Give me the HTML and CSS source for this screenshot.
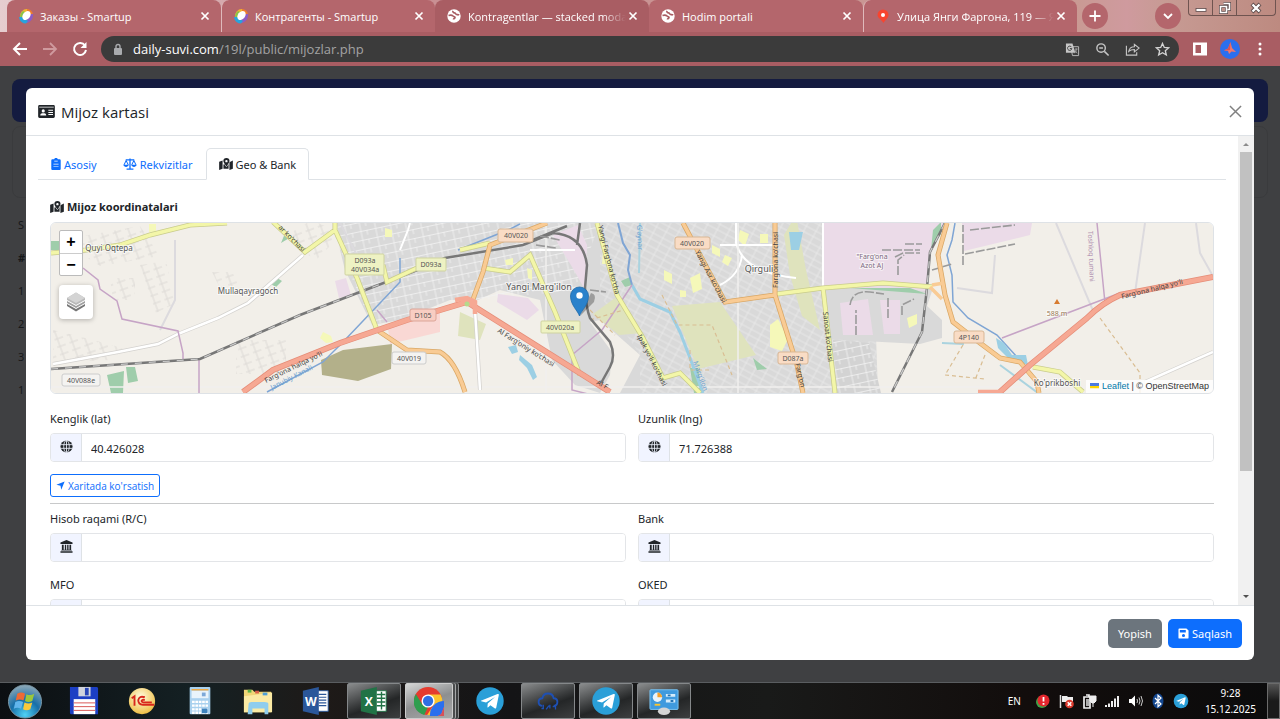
FILE: index.html
```html
<!DOCTYPE html>
<html lang="uz">
<head>
  <meta charset="UTF-8">
  <meta name="viewport" content="width=device-width, initial-scale=1.0">
  <title>Mijoz kartasi</title>
  <link rel="stylesheet" href="styles.css">
</head>
<body>
  <svg class="sprite" aria-hidden="true">
    <symbol id="i-close" viewBox="0 0 10 10"><path d="M1.5 1.5l7 7M8.500 1.500l-7 7" stroke="currentColor" stroke-width="1.700" fill="none"/></symbol>
    <symbol id="i-smartup" viewBox="0 0 16 16">
      <path d="M2 9A7 7 0 0 1 9 1l3 2-8 9z" fill="#f2b632"/>
      <path d="M2 8a7 7 0 0 1 3-5l2 1-4 7z" fill="#8bc34a"/>
      <path d="M9 1a6 6 0 0 1 6 6l-2 1-4-5z" fill="#ef7d2d"/>
      <path d="M15 6a8 8 0 0 1-9 9l2-3 5-6z" fill="#8d5cc4"/>
      <path d="M1 9a7 7 0 0 0 7 6.500l2-2.500-6-4z" fill="#29a3dc"/>
      <ellipse cx="8.500" cy="7.500" rx="3.600" ry="5" transform="rotate(38 8.500 7.500)" fill="#fff"/>
    </symbol>
    <symbol id="i-world" viewBox="0 0 16 16">
      <circle cx="8" cy="8" r="6.700" fill="#fff"/>
      <path d="M2.500 7.500c1.500-.5 3.500-.5 4.500.5s2 .5 2 1.500-1.500 1-1.500 2M7 2.800c-.5 1.200.5 2 1.500 2s1 1.500 2 1.700 2 0 2.500.8" stroke="#a95d63" stroke-width="1.700" fill="none"/>
    </symbol>
    <symbol id="i-map" viewBox="0 0 16 14">
      <path d="M0 4.500L4 3v9.500L0 14zM5 8l1-1c1 2 2 3 2.500 3.500.6-.6 1.500-1.500 2.500-3.500v5.500L5 12.500zM12 5l4-2v9.500L12 14z" fill="currentColor"/>
      <path fill-rule="evenodd" d="M8.500 0a3.600 3.600 0 0 1 3.600 3.600c0 1.800-2.500 5-3.600 6.200-1.100-1.200-3.600-4.400-3.600-6.200A3.600 3.600 0 0 1 8.500 0zm0 2.300a1.400 1.400 0 1 0 0 2.800 1.400 1.400 0 0 0 0-2.800z" fill="currentColor"/>
    </symbol>
    <symbol id="i-globe" viewBox="0 0 14 14">
      <circle cx="7" cy="7" r="6.500" fill="currentColor"/>
      <path d="M.5 5h13M.5 9h13M7 .5v13" stroke="#f1f4ff" stroke-width=".9"/>
      <ellipse cx="7" cy="7" rx="3" ry="6.500" stroke="#f1f4ff" stroke-width=".9" fill="none"/>
    </symbol>
    <symbol id="i-bank" viewBox="0 0 14 14">
      <path d="M7 0l6.500 2.800v1.400H.5V2.800zM2 5h2v5.500h1.200V5h1.500v5.500h1V5h1.500v5.500h1V5H12v5.500l1 .8H1l1-.8zM.5 12h13v1.700H.5z" fill="currentColor"/>
    </symbol>
    <symbol id="i-telegram" viewBox="0 0 28 28">
      <circle cx="14" cy="14" r="12.800" fill="#2a9fd8"/>
      <path d="M5.500 13.800L21 7.500c.9-.3 1.400.2 1.200 1.200l-2.400 11.500c-.2.9-.8 1-1.500.6l-3.900-2.900-2 2c-.4.300-.8.100-.8-.4l.3-3.100 6.800-6.200-8.400 5.300-4.500-1.300z" fill="#fff"/>
    </symbol>
    <symbol id="i-bird" viewBox="0 0 20 20">
      <circle cx="10" cy="10" r="10" fill="#2b6fee"/>
      <path d="M10.500 3l1.500 6 4 4-4.500-.5L9 15l-1-3-4-.5 4-2z" fill="#f0776d"/><path d="M10.500 3L10 11l-6 .5 4-2z" fill="#d95058"/>
    </symbol>
  </svg>

  <header class="browser">
    <div class="tabstrip">
      <div class="btab"><svg class="fav"><use href="#i-smartup"/></svg><span class="btab-title">Заказы - Smartup</span><button class="btab-x" aria-label="Close tab"><svg><use href="#i-close"/></svg></button></div>
      <div class="btab split"><svg class="fav"><use href="#i-smartup"/></svg><span class="btab-title">Контрагенты - Smartup</span><button class="btab-x" aria-label="Close tab"><svg><use href="#i-close"/></svg></button></div>
      <div class="btab current"><svg class="fav"><use href="#i-world"/></svg><span class="btab-title fade">Kontragentlar — stacked moda</span><button class="btab-x" aria-label="Close tab"><svg><use href="#i-close"/></svg></button></div>
      <div class="btab"><svg class="fav"><use href="#i-world"/></svg><span class="btab-title">Hodim portali</span><button class="btab-x" aria-label="Close tab"><svg><use href="#i-close"/></svg></button></div>
      <div class="btab split"><svg class="fav" viewBox="0 0 16 16"><path d="M8 1.500a5.500 5.500 0 0 1 5.500 5.500c0 3-3 4.500-5 8-2-3.500-6-5-6-8A5.500 5.500 0 0 1 8 1.500z" fill="#f8442f"/><circle cx="8" cy="7" r="2" fill="#fff"/></svg><span class="btab-title fade">Улица Янги Фаргона, 119 — Я</span><button class="btab-x" aria-label="Close tab"><svg><use href="#i-close"/></svg></button></div>
      <button class="round-btn" aria-label="New tab"><svg viewBox="0 0 12 12"><path d="M6 .5v11M.5 6h11" stroke="#fff" stroke-width="1.800"/></svg></button>
      <span class="grow"></span>
      <button class="round-btn" aria-label="Search tabs"><svg viewBox="0 0 12 12"><path d="M2 4l4 4 4-4" stroke="#fff" stroke-width="1.800" fill="none"/></svg></button>
      <div class="win-btns">
        <button aria-label="Minimize"><svg viewBox="0 0 14 12"><rect x="2" y="6.500" width="10" height="3" fill="#fff" stroke="#5c4a4a" stroke-width=".8"/></svg></button>
        <button aria-label="Restore"><svg viewBox="0 0 14 12"><path d="M5.500 1.500h6v6h-2M2.500 4.500h6v6h-6z" fill="none" stroke="#5c4a4a" stroke-width="3"/><path d="M5.500 1.500h6v6h-2M2.500 4.500h6v6h-6z" fill="none" stroke="#fff" stroke-width="1.600"/></svg></button>
        <button class="win-x" aria-label="Close"><svg viewBox="0 0 14 12"><path d="M3 2l8 8M11 2l-8 8" stroke="#5c4a4a" stroke-width="4"/><path d="M3.500 2.500l7 7M10.500 2.500l-7 7" stroke="#fff" stroke-width="2.400"/></svg></button>
      </div>
    </div>
    <div class="toolbar">
      <button class="nav-btn" aria-label="Back"><svg viewBox="0 0 16 16"><path d="M15 8H2M8 2L2 8l6 6" stroke="#fff" stroke-width="2" fill="none"/></svg></button>
      <button class="nav-btn" aria-label="Forward"><svg viewBox="0 0 16 16"><path d="M1 8h13M8 2l6 6-6 6" stroke="#cf9a9e" stroke-width="1.800" fill="none"/></svg></button>
      <button class="nav-btn" aria-label="Reload"><svg viewBox="0 0 16 16"><path d="M13 4.500A6 6 0 1 0 14 9" stroke="#fff" stroke-width="2" fill="none"/><path d="M14.500 1v6h-6z" fill="#fff"/></svg></button>
      <div class="omnibox">
        <svg class="lock" viewBox="0 0 10 13"><rect x="1" y="5" width="8" height="7" rx="1" fill="#a9abae"/><path d="M3 5V3.500a2 2 0 0 1 4 0V5" stroke="#a9abae" stroke-width="1.400" fill="none"/></svg>
        <span class="url"><b>daily-suvi.com</b>/19l/public/mijozlar.php</span>
        <button aria-label="Translate"><svg viewBox="0 0 16 16"><path d="M6 5h8.500v9.500H8z" stroke="#bbb" fill="none"/><path d="M1 1.500h7l3 10H1z" fill="#c6c6c6"/><path d="M7 5.500A2.300 2.300 0 1 0 7.300 7H5.200" stroke="#3c3c3c" fill="none"/><path d="M10.500 7.500h3M12 7v1c0 2-1 3-2 4m1-3c.5 1 1 2 2 3" stroke="#bbb" stroke-width=".8" fill="none"/></svg></button>
        <button aria-label="Zoom"><svg viewBox="0 0 16 16"><circle cx="6.500" cy="6.500" r="4.500" stroke="#c6c6c6" stroke-width="1.500" fill="none"/><path d="M4.500 6.500h4M10 10l4.500 4.500" stroke="#c6c6c6" stroke-width="1.600"/></svg></button>
        <button aria-label="Share"><svg viewBox="0 0 16 16"><path d="M1.500 4v10h11v-3" stroke="#c6c6c6" stroke-width="1.200" fill="none"/><path d="M4 10c.5-3 2.500-5 6-5V2.500l5 4-5 4V8c-3 0-4.500.5-6 2z" stroke="#c6c6c6" stroke-width="1.200" fill="none"/></svg></button>
        <button aria-label="Bookmark"><svg viewBox="0 0 16 16"><path d="M8 1.500l1.900 4.300 4.700.4-3.600 3.100 1.100 4.600L8 11.500l-4.100 2.400L5 9.300 1.400 6.200l4.700-.4z" stroke="#d4d4d4" stroke-width="1.400" fill="none"/></svg></button>
      </div>
      <button class="nav-btn" aria-label="Side panel"><svg viewBox="0 0 16 16"><path fill-rule="evenodd" d="M1 1.500h14v13H1zM3.500 4v8H9V4z" fill="#fff"/></svg></button>
      <button class="nav-btn big" aria-label="Profile"><svg><use href="#i-bird"/></svg></button>
      <button class="nav-btn" aria-label="Menu"><svg viewBox="0 0 16 16"><circle cx="8" cy="3" r="1.500" fill="#fff"/><circle cx="8" cy="8" r="1.500" fill="#fff"/><circle cx="8" cy="13" r="1.500" fill="#fff"/></svg></button>
    </div>
  </header>

  <main class="page">
    <div class="under">
      <div class="under-nav"></div>
      <div class="under-card"></div>
      <div class="under-list"><span>S</span><b>#</b><span>1</span><span>2</span><span>3</span><span>1</span></div>
    </div>

    <div class="modal-wrap">
      <section class="modal" role="dialog" aria-labelledby="modalTitle">
        <div class="modal-header">
          <svg class="card-icon" viewBox="0 0 18 14"><path fill-rule="evenodd" d="M1.500 0h15A1.500 1.500 0 0 1 18 1.500v11a1.500 1.500 0 0 1-1.500 1.500h-15A1.500 1.500 0 0 1 0 12.500v-11A1.500 1.500 0 0 1 1.500 0zM1.200 1.800v1h15.600v-1zM5.500 4.700a1.700 1.700 0 1 0 0 3.400 1.700 1.700 0 0 0 0-3.400zM2.300 11.300h6.400c0-1.600-1-2.500-2-2.500H4.300c-1 0-2 .9-2 2.500zM11 5.200v1h5v-1zm0 2.300v1h5v-1zm0 2.300v1h5v-1z" fill="currentColor"/></svg>
          <h1 id="modalTitle">Mijoz kartasi</h1>
          <button class="modal-x" aria-label="Close"><svg viewBox="0 0 14 14"><path d="M1 1l12 12M13 1L1 13" stroke="#808080" stroke-width="1.600"/></svg></button>
        </div>

        <div class="modal-main">
          <div class="modal-body">
            <nav class="tabs">
              <a href="#asosiy"><svg class="narrow" viewBox="0 0 11 14"><path fill-rule="evenodd" d="M1.300 1.500h2a2.300 2.300 0 0 1 4.400 0h2A1.300 1.300 0 0 1 11 2.800v9.900A1.300 1.300 0 0 1 9.700 14H1.300A1.300 1.300 0 0 1 0 12.700V2.800a1.300 1.300 0 0 1 1.300-1.300zM3.500 3.200v.8h4v-.8zM2.500 6.800v.8h6v-.8zm0 2.700v.8h6v-.8z" fill="currentColor"/></svg>Asosiy</a>
              <a href="#rekvizitlar"><svg viewBox="0 0 16 14"><path d="M3 2.200h10M8 .5v12M4 13h8" stroke="currentColor" stroke-width="1.500"/><path d="M1 8l2.500-5L6 8M10 8l2.500-5L15 8" stroke="currentColor" stroke-width="1.200" fill="none"/><path d="M.2 8h6.400c-.4 1.700-1.700 2.400-3.200 2.400S.6 9.700.2 8zm9.200 0h6.400c-.4 1.700-1.700 2.400-3.200 2.400S9.800 9.700 9.400 8z" fill="currentColor"/></svg>Rekvizitlar</a>
              <a href="#geo" class="active"><svg><use href="#i-map"/></svg>Geo &amp; Bank</a>
            </nav>

            <div class="pane">
              <h2><svg><use href="#i-map"/></svg>Mijoz koordinatalari</h2>

              <div class="map">
                <svg class="map-canvas" viewBox="51 223 1162 170" preserveAspectRatio="xMidYMid slice" role="img" aria-label="Xarita">
                  <defs>
                    <pattern id="streets" width="15" height="9" patternUnits="userSpaceOnUse" patternTransform="rotate(-12)"><path d="M0 4.500h15M5 0v9M11 4v5" stroke="#f2f2f2" stroke-width=".8" fill="none"/></pattern>
                    <pattern id="streets2" width="11" height="13" patternUnits="userSpaceOnUse" patternTransform="rotate(28)"><path d="M0 3h11M0 9h11M4 0v13" stroke="#ececec" stroke-width=".7" fill="none"/></pattern>
                    <pattern id="lanes" width="13" height="8" patternUnits="userSpaceOnUse" patternTransform="rotate(-20)"><path d="M0 2h9M3 0v8" stroke="#dddad6" stroke-width="1" fill="none"/></pattern>
                  </defs>
                  <rect x="51" y="223" width="1162" height="170" fill="#f2efe9"/>
                  <!-- built-up land -->
                  <path d="M337 223H872L878 393H620l20-38-40-35-10 2 22 30-2 23-10 18-25-8-23-25-12-60-40-10-22 10h-28l-50 20-28 5-27-55-5-20z" fill="#d9d9d9"/>
                  <path d="M337 223H600L575 290 478 300 372 325 340 250z" fill="url(#streets)"/>
                  <path d="M600 223H872L878 393H640l0-38-40-60z" fill="url(#streets2)"/>
                  <path d="M823 288h110l-6 18 15 14v18l-22 6-95-5z" fill="#d9d9d9"/>
                  <path d="M833 340l36 3 12 50h-48z" fill="#d3d3d3"/><path d="M833 340l36 3 12 50h-48z" fill="url(#streets)"/>
                  <path d="M60 240l80-14 20 30-60 10zM110 278h25v22h-22zM140 265l26-4 10 42-20 10zM236 340h50v34h-50zM212 272h20l12 20h-22zM282 238l30-18 30 14-26 26z" fill="url(#lanes)"/>
                  <path d="M53 330l40 10 30 8-10 12-60 2z" fill="url(#lanes)"/>
                  <!-- industry -->
                  <path d="M824 223h121l-14 30-4 38-103-4zM962 223h70l-2 12-66 16zM553 235l25-10 9 20-2 45-10-18zM498 294l30 4 11 12-12 10-30-18zM840 303l28-4 5 36h-30zM880 300h20v34h-16zM335 281l11-3 5 17-12 3z" fill="#ebdbe8"/>
                  <path d="M388 328l52-18v22l-50 12z" fill="#f9d8d4"/>
                  <!-- fields and parks -->
                  <path d="M672 306l48-4 36 53-58 14zM593 314l22-16 28 35-24 2zM460 312l26 12-6 16-22-4zM790 275l-6-40 12-20 10 55 14 60-18-14z" fill="#dfe3bd"/>
                  <path d="M321 360l22-10 49-6-1 25-33 12-36-6z" fill="#b3b08a"/>
                  <path d="M107 375l17-4-1 22h-12zM126 367h9l3 14-10 2zM51 241h9v9h-9zM281 243l5-12 5 6zM269 283l8-5 5 3-6 6zM621 281l9-4 2 8-7 2zM690 368h8l4 25h-8zM753 358l14 11-10 1zM931 250l2-20 8-8v12zM850 288l60 0 17 6z" fill="#9fcdab"/>
                  <path d="M149 224h7v8h-7zM323 332l8 4 2 6-7 1-6-5zM385 228l7 2v7h-7zM505 260l8-2v7h-7zM527 268l5 2v10l-4-2zM603 250l5 2v12h-6zM664 270l8 4v10l-8-4zM690 278l10-5 2 16-9 4zM680 290l6 1v6h-6zM712 245l8 4v8l-8-4zM740 230l9 4-4 12-7-6zM725 255l7 3-4 8-6-4zM760 234l8 0v9h-8zM770 325l8-6 10 20-6 12-12-4zM907 318l10-4v10l-8 4z" fill="#f5f8b9"/>
                  <!-- minor roads -->
                  <g fill="none" stroke="#fff" stroke-width="2">
                    <path d="M720 245h55M736 223v20q8 30 60 35M720 285q20-10 22-30M823 223v65M400 250l8-20 2-7M530 250l45 0"/>
                    <path d="M546 223v170M738 223v170M51 387h1162" stroke-width="1.500" stroke="#f1f0ee"/>
                  </g>
                  <path d="M53 364l65-12 40-8 20-10 40-16 30-15 55-48M1145 382l68-30M480 390l-5-80" fill="none" stroke="#d4d2cf" stroke-width="4"/>
                  <path d="M53 364l65-12 40-8 20-10 40-16 30-15 55-48M1145 382l68-30M480 390l-5-80" fill="none" stroke="#fff" stroke-width="2.500"/>
                  <path d="M1056 223l38 90M1145 223l-10 70M1196 223l4 30 14 25M995 255l-3 38-35-5M340 223l20 38M175 240v60l-15 30" fill="none" stroke="#dcdade" stroke-width="2"/>
                  <!-- water -->
                  <g fill="none" stroke="#7fa5d4" stroke-width="2">
                    <path d="M267 392l56-30 20-20 57-60 0-24M458 250l50-20 12-6M955 223l-3 17-5 15 5 20 1 27 15 16 29 17 20 22 20 25" stroke-width="1.500"/>
                    <path d="M618 223l5 20 7 12-2 15 4 15"/>
                    <path d="M632 285l8 14 30 13 10 20 10 26 13 35" stroke="#9ccfe4" stroke-width="3"/><path d="M640 223l-1 50M942 343l22 1M1000 365l38 28" stroke="#aad3df" stroke-width="2"/>
                  </g>
                  <path d="M996 338l8 5 8 12 14 0 2 10-18-5-12-12zM508 347l8-2 2 7-6 2zM520 355l12 10 5 12-4 3-6-12-8-8zM789 232h14l-4 18h-8z" fill="#9ccfe4"/>
                  <!-- district borders -->
                  <path d="M83 268l15 12 2 9 17 12 5 18 56 12 5 22v6M199 359v34M632 285l-30 45-30 25v35l20 5M1097 223l8 80M1002 338l118-45M377 310l10 12" fill="none" stroke="#c6a4c6" stroke-width="1.500"/>
                  <path d="M590 310l25 25M590 320l40-12M662 295l15 30h35l20 50M690 350v20h20M963 345l-18 30 40 4M985 355l-10 25M1100 318l40 55v20" fill="none" stroke="#d9bd92" stroke-width="1.200" stroke-dasharray="4 3"/>
                  <!-- rail -->
                  <g fill="none">
                    <path d="M51 369l149-10 100-44 120-46 25-11 78-13 30-12q30 2 34 32l-2 23q1 20 5 30l20 24q6 14 0 25l-10 18M945 223l-15 29-3 36-5 44-30 60M533 240l34-14M580 223l-3 22" stroke="#777" stroke-width="2.500"/>
                    <path d="M51 369l149-10 100-44 120-46 25-11M945 223l-15 29-3 36-5 44-30 60" stroke="#ccc" stroke-width="1.200" stroke-dasharray="7 7"/>
                    <path d="M882 250h38M895 257l8-4h17M898 275v-15l6-5M905 244h17M850 305q2-15 20-13l14 2M856 335v-25M888 318v-20M902 315v-10l12-6M932 270l20-6M965 254l50-10M963 265v-40M970 230l45-5M540 236l20 4M536 245l20 3M590 290l16 2" stroke="#9a9a9a" stroke-width="1.600" stroke-dasharray="9 2"/>
                  </g>
                  <!-- secondary roads -->
                  <g fill="none" stroke="#c9cc8c" stroke-width="5"><path d="M51 253l35-3 34-5 30-10 40-10 37-2M273 222l32 30 30-22 22 48 20 52M335 230v-7M383 265l4 17 30-14M460 250l30-7M483 268l27 4 20-17 25 57 25 63M597 223l20 72 26 43 20 40 17-5 20 20M777 294l46-6 60-5 50 4M823 288l12 105M1033 367l27 5 23 20"/></g>
                  <g fill="none" stroke="#f3f6a8" stroke-width="3.500"><path d="M51 253l35-3 34-5 30-10 40-10 37-2M273 222l32 30 30-22 22 48 20 52M335 230v-7M383 265l4 17 30-14M460 250l30-7M483 268l27 4 20-17 25 57 25 63M597 223l20 72 26 43 20 40 17-5 20 20M777 294l46-6 60-5 50 4M823 288l12 105M1033 367l27 5 23 20"/></g>
                  <g fill="none" stroke="#d9a765" stroke-width="5"><path d="M547 223l-57 22-7 27-11 30M377 330l30 20 33 2q15 8 25 40M683 223l42 79 50-7V223M775 295l22 70 6 28M947 223l-9 32 7 40 8 27 27 21 20 15 20 4 17 20 2 11"/></g>
                  <g fill="none" stroke="#f9cb94" stroke-width="3.500"><path d="M547 223l-57 22-7 27-11 30M377 330l30 20 33 2q15 8 25 40M683 223l42 79 50-7V223M775 295l22 70 6 28M947 223l-9 32 7 40 8 27 27 21 20 15 20 4 17 20 2 11M930 287l12 12M932 285l12-2"/></g>
                  <g fill="none" stroke="#e58d78" stroke-width="6"><path d="M243 392l30-22 67-27 67-23 60-18 143 90M1000 392l30-27 57-47q15-15 33-23l93-18"/></g>
                  <g fill="none" stroke="#f6a893" stroke-width="4.500"><path d="M243 392l30-22 67-27 67-23 60-18 143 90M455 300l12-2 8 4v12M978 392h22l30-27 57-47q15-15 33-23l93-18"/></g>
                  <circle cx="467" cy="304" r="2.500" fill="#b6d98b"/>
                  <!-- road shields -->
                  <g class="shield">
                    <g fill="#eef2c3" stroke="#cfd3a0"><rect x="345" y="254" width="39" height="21" rx="1"/><rect x="416" y="258" width="30" height="13" rx="1"/><rect x="541" y="321" width="39" height="12" rx="1"/></g>
                    <g fill="#f9dcc5" stroke="#d9b795"><rect x="498" y="229" width="35" height="13" rx="2"/><rect x="675" y="237" width="35" height="12" rx="2"/><rect x="778" y="352" width="30" height="12" rx="2"/><rect x="954" y="331" width="30" height="12" rx="2"/></g>
                    <g fill="#f8cdc2" stroke="#dba598"><rect x="410" y="309" width="26" height="12" rx="2"/></g>
                    <g fill="#f4f3f1" stroke="#ccc"><rect x="392" y="352" width="34" height="12" rx="2"/><rect x="62" y="374" width="38" height="12" rx="2"/></g>
                    <text x="365" y="263">D093a</text><text x="365" y="272">40V034a</text><text x="431" y="267">D093a</text><text x="560" y="330">40V020a</text>
                    <text x="516" y="238">40V020</text><text x="692" y="246">40V020</text><text x="793" y="361">D087a</text><text x="969" y="340">4P140</text>
                    <text x="423" y="318">D105</text><text x="409" y="361">40V019</text><text x="81" y="383">40V088e</text>
                  </g>
                  <g class="place">
                    <text x="109" y="251" class="sm">Quyi Oqtepa</text><text x="248" y="294" class="sm">Mullaqayragoch</text>
                    <text x="539" y="290">Yangi Marg'ilon</text><text x="759" y="272">Qirguli</text>
                    <text x="1057" y="386" class="sm">Ko'prikboshi</text>
                    <text x="872" y="259" class="tiny">"Farg'ona</text><text x="872" y="268" class="tiny">Azot AJ</text>
                    <text x="1057" y="316" class="tiny peak">588 m</text>
                    <path d="M1054 304h6l-3-5z" fill="#d77b2f"/>
                  </g>
                  <g class="road-name">
                    <text transform="translate(266 383) rotate(-26)">Farg'ona halqa yo'li</text>
                    <text transform="translate(497 332) rotate(32)">Al Farg'oniy ko'chasi</text>
                    <text transform="translate(596 384) rotate(28)">Al F</text>
                    <text transform="translate(598 226) rotate(76)">Yangi Farg'ona ko'cha</text>
                    <text transform="translate(637 336) rotate(63)">Ipak yo'li ko'chasi</text>
                    <text transform="translate(695 252) rotate(62)">Yangi Asr ko'chasi</text>
                    <text transform="translate(778 288) rotate(-90)">Farg'ona ko'chasi</text>
                    <text transform="translate(823 312) rotate(84)">Sanoat ko'chasi</text>
                    <text transform="translate(795 364) rotate(76)">Farg'on</text>
                    <text transform="translate(278 228) rotate(45)">ar ko'chasi</text>
                    <text transform="translate(1122 299) rotate(-14)">Farg'ona halqa yo'li</text>
                    <text transform="translate(1088 231) rotate(88)" class="border-name">Toshloq tumani</text>
                    <text transform="translate(693 362) rotate(70)" class="water-name">Marg'ilon</text>
                    <text transform="translate(637 225) rotate(88)" class="water-name">G'aynar</text>
                    <text transform="translate(272 390) rotate(-27)" class="water-name">Janubiy Kanali</text>
                  </g>
                  <!-- marker -->
                  <path d="M580 316l14-14q3-8-3-9z" fill="#000" opacity=".28"/>
                  <path d="M579.500 316c-1.500-5-9-11-9-20a9 9 0 0 1 18 0c0 9-7.500 15-9 20z" fill="#2a81cb" stroke="#1f6aa8" stroke-width=".8"/>
                  <circle cx="579.500" cy="295.500" r="3.200" fill="#fff"/>
                </svg>
                <div class="map-ctrl">
                  <div class="zoom"><button aria-label="Zoom in">+</button><button aria-label="Zoom out">−</button></div>
                  <button class="layers" aria-label="Layers"><svg viewBox="0 0 20 20"><path d="M1 12l9 5 9-5v2l-9 5.500L1 14z" fill="#777"/><path d="M1 9l9 5 9-5v2l-9 5-9-5z" fill="#a0a0a0"/><path d="M10 .5l9 5.500v2l-9 5-9-5V6z" fill="#b9b9b9"/><path d="M10 .5L19 6l-9 5-9-5z" fill="#d4d4d4"/></svg></button>
                </div>
                <div class="attribution"><svg viewBox="0 0 12 8"><path fill="#4c7be1" d="M0 0h12v4H0z"/><path fill="#ffd500" d="M0 4h12v3H0z"/></svg><a href="#leaflet">Leaflet</a> | © OpenStreetMap</div>
              </div>

              <div class="row">
                <div class="field"><label for="lat">Kenglik (lat)</label><div class="group"><span><svg><use href="#i-globe"/></svg></span><input type="text" id="lat" value="40.426028"></div></div>
                <div class="field"><label for="lng">Uzunlik (lng)</label><div class="group"><span><svg><use href="#i-globe"/></svg></span><input type="text" id="lng" value="71.726388"></div></div>
              </div>
              <button class="btn-outline" type="button"><svg viewBox="0 0 12 12"><path d="M11.500.5L7 11.500 6 6.200.5 5z" fill="currentColor"/></svg>Xaritada ko'rsatish</button>
              <hr>
              <div class="row">
                <div class="field"><label for="hisob">Hisob raqami (R/C)</label><div class="group"><span><svg><use href="#i-bank"/></svg></span><input type="text" id="hisob"></div></div>
                <div class="field"><label for="bank">Bank</label><div class="group"><span><svg><use href="#i-bank"/></svg></span><input type="text" id="bank"></div></div>
                <div class="field"><label for="mfo">MFO</label><div class="group"><span></span><input type="text" id="mfo"></div></div>
                <div class="field"><label for="oked">OKED</label><div class="group"><span></span><input type="text" id="oked"></div></div>
              </div>
            </div>
          </div>
          <div class="scrollbar" aria-hidden="true">
            <svg viewBox="0 0 16 16"><path d="M5 10l3-3 3 3z" fill="#8b8b8b"/></svg>
            <div class="track"><div class="thumb"></div></div>
            <svg viewBox="0 0 16 16"><path d="M5 6l3 3 3-3z" fill="#505050"/></svg>
          </div>
        </div>

        <div class="modal-footer">
          <button class="btn grey" type="button">Yopish</button>
          <button class="btn blue" type="button"><svg viewBox="0 0 12 12"><path fill-rule="evenodd" d="M1.500.5h7.700l2.300 2.300v7.700a1 1 0 0 1-1 1h-9a1 1 0 0 1-1-1v-9a1 1 0 0 1 1-1zM2 2.200v2.600h6.500V2.200zM6 6.500a1.700 1.700 0 1 0 0 3.400 1.700 1.700 0 0 0 0-3.400z" fill="#fff"/></svg>Saqlash</button>
        </div>
      </section>
    </div>
  </main>

  <footer class="taskbar">
    <button class="start" aria-label="Start"><svg viewBox="0 0 36 36"><defs><radialGradient id="orb" cx=".5" cy=".9" r=".9"><stop offset="0" stop-color="#4fd2f5"/><stop offset=".5" stop-color="#176ea8"/><stop offset="1" stop-color="#8fa9b8"/></radialGradient></defs><circle cx="18" cy="18" r="17" fill="url(#orb)" stroke="#7b98a6"/><path d="M10 10q4-2.500 8 0l-1.500 7q-4-2-8 0z" fill="#ee6a35"/><path d="M19.500 10.500q4 2 8-.5l-2 7.500q-4 2-7.500 0z" fill="#9bc83c"/><path d="M8 18.500q4-2 8 0l-2 7q-4-2-7.500 0z" fill="#62b5ec"/><path d="M17.500 19q4 2 8 0l-2 7q-4 2-7.500 0z" fill="#fac93b"/></svg></button>
    <button class="app" aria-label="Total Commander"><svg viewBox="0 0 32 32"><path d="M1 1h29l1 1v28H2l-1-1z" fill="#1c3fc4"/><path d="M10 1h13v10H10z" fill="#cfd3dc"/><path d="M17 2h4v8h-4z" fill="#2746b8"/><path d="M5 14h23v16H5z" fill="#fff"/><path d="M5 18h23M5 22h23M5 26h23" stroke="#d8504e"/></svg></button>
    <button class="app" aria-label="1C"><svg viewBox="0 0 32 32"><defs><radialGradient id="gold" cx=".45" cy=".35" r=".7"><stop offset="0" stop-color="#fffbe0"/><stop offset="1" stop-color="#eebb3c"/></radialGradient></defs><circle cx="16" cy="16" r="14" fill="url(#gold)"/><path d="M5 13l3-2v10M19 12q-6-2-7 3 0 5 5 5h12M19 15q-3-1-3.500 1 .5 1.500 2 1.500h9" fill="none" stroke="#d8271c" stroke-width="2"/></svg></button>
    <button class="app" aria-label="Calculator"><svg viewBox="0 0 32 32"><rect x="5" y="1" width="22" height="29" rx="1" fill="#a9d1ee"/><rect x="7" y="5" width="18" height="8" fill="#e9f4fb"/><path d="M7 4h18" stroke="#f3a63a" stroke-width="1.500"/><path d="M18 7h4v4h-4z" fill="#7da9d8"/><path d="M7.500 17h17M7.500 21h17M7.500 25h17M7.500 28.500h17" stroke="#fff" stroke-width="2.500" stroke-dasharray="2.800 .8"/><path d="M18 24h6v5h-6z" fill="#3e83bd"/></svg></button>
    <button class="app" aria-label="Explorer"><svg viewBox="0 0 32 32"><path d="M1 4h9l2 2h18v22H1z" fill="#f1d677"/><path d="M1 11l30-4v21H1z" fill="#fbeaa4"/><path d="M5 4h4v3H5z" fill="#5cb548"/><path d="M13 5h4v3h-4z" fill="#d95f4b"/><path d="M21 7h5v3h-5z" fill="#4f9fd6"/><path d="M6 19q0-2 3-2h14q4 0 4 2v11h-4v-6H10v6H5z" fill="#8fcdee"/></svg></button>
    <button class="app" aria-label="Word"><svg viewBox="0 0 32 32"><path d="M17 5h12v22H17z" fill="#fff" stroke="#2b579a"/><path d="M19 9h8M19 12h8M19 15h8M19 18h8M19 21h8" stroke="#2b579a" stroke-width="1.300"/><path d="M2 5l17-4v30L2 27z" fill="#2b579a"/><text class="office" x="10.500" y="21">W</text></svg></button>
    <button class="app open" aria-label="Excel"><svg viewBox="0 0 32 32"><path d="M17 5h12v22H17z" fill="#fff" stroke="#217346"/><path d="M19 9h9M19 13h9M19 17h9M19 21h9M24 6v19" stroke="#217346" stroke-width="1.500"/><path d="M2 5l17-4v30L2 27z" fill="#217346"/><text class="office" x="10.500" y="21">X</text></svg></button>
    <button class="app open front" aria-label="Chrome"><svg viewBox="0 0 32 32"><circle cx="15" cy="16" r="15" fill="#e53b2e"/><path d="M2 8.500L9 20l6 2-4 9A15 15 0 0 1 2 8.500z" fill="#2f9e4f"/><path d="M15 9h13.300A15 15 0 0 1 14 31l7-11z" fill="#fbc42d"/><circle cx="15" cy="16" r="7" fill="#fff"/><circle cx="15" cy="16" r="5.500" fill="#2f6fe4"/><svg x="17" y="16" width="15" height="15"><use href="#i-bird"/></svg></svg></button>
    <button class="app" aria-label="Telegram"><svg><use href="#i-telegram"/></svg></button>
    <button class="app open" aria-label="Cloud"><svg viewBox="0 0 32 32"><path d="M10 21q-4 0-4-4t4-4q1-5 6-5t6 5q4 0 4 4t-4 4" fill="none" stroke="#1e50b4" stroke-width="2"/><path d="M11 20v4h-2M14 25l3-4M18 20v4M21 22h3v3" stroke="#1e50b4" stroke-width="1.400" fill="none"/></svg></button>
    <button class="app open" aria-label="Telegram 2"><svg><use href="#i-telegram"/></svg></button>
    <button class="app open" aria-label="Control panel"><svg viewBox="0 0 32 32"><rect x="1" y="4" width="30" height="21" rx="1" fill="#3f9ade" stroke="#7cc4f2"/><circle cx="9" cy="12" r="5" fill="#e8f3fb"/><path d="M9 12V7a5 5 0 0 1 5 5z" fill="#f3a02c"/><path d="M18 10h10M18 16h10" stroke="#d4ecfb" stroke-width="3"/><path d="M20 10h3M23 16h3" stroke="#2473b5" stroke-width="2"/><path d="M6 20h6" stroke="#fbc42d" stroke-width="2"/><ellipse cx="16" cy="27" rx="6.500" ry="4" fill="#d5d5d5"/></svg></button>
    <span class="grow"></span>
    <span class="lang">EN</span>
    <div class="tray">
      <svg viewBox="0 0 16 16"><circle cx="7" cy="9" r="6" fill="#43a047"/><circle cx="8.500" cy="7.500" r="6" fill="#e3262d"/><path d="M8.500 4v4.500M8.500 10v1.700" stroke="#fff" stroke-width="1.800"/></svg>
      <svg viewBox="0 0 16 16"><path d="M2.500 2v13" stroke="#ddd" stroke-width="1.500"/><path d="M4 3h5l1 1h5v6H9L8 9H4z" fill="#eee"/><circle cx="11.500" cy="11" r="4.300" fill="#dd3a2d"/><path d="M9.700 9.200l3.600 3.600M13.300 9.200l-3.600 3.600" stroke="#fff" stroke-width="1.500"/></svg>
      <svg viewBox="0 0 16 16"><path d="M3 4h6v11H3zM5 2h3v2" fill="none" stroke="#eee" stroke-width="1.700"/><path d="M5 6h3v7H5z" fill="#aaa"/><path d="M9 3h6v5l-2 2h-2L9 8zM12 9v5" fill="#eee" stroke="#eee"/></svg>
      <svg viewBox="0 0 16 16"><path d="M2 12v2M5 10.500V14M8 8v6M11 5.500V14M14 3v11" stroke="#eee" stroke-width="2"/></svg>
      <svg viewBox="0 0 16 16"><path d="M2 6h2.500L8 2.500v11L4.500 10H2z" fill="#fff"/><path d="M10 6q1 2 0 4M12 4.500q2 3.500 0 7M14 3q3 5 0 10" fill="none" stroke="#ccc"/></svg>
      <svg viewBox="0 0 16 16"><ellipse cx="8" cy="8" rx="5.500" ry="7.500" fill="#14478f"/><path d="M5 5l6 6-3 2.700V2.300L11 5l-6 6" fill="none" stroke="#fff" stroke-width="1.200"/></svg>
      <svg><use href="#i-telegram"/></svg>
    </div>
    <div class="clock"><span>9:28</span><span>15.12.2025</span></div>
    <button class="desktop" aria-label="Show desktop"></button>
  </footer>
</body>
</html>
```
FILE: styles.css
```css
* {
  box-sizing: border-box;
}
body {
  margin: 0;
  height: 100vh;
  display: flex;
  flex-direction: column;
  overflow: hidden;
  font-family: "Noto Sans", "Open Sans", sans-serif;
  font-size: 11px;
  color: #212529;
  background: #3f4042;
}
button {
  font-family: inherit;
  padding: 0;
  border: none;
  background: none;
  display: flex;
  align-items: center;
  justify-content: center;
  cursor: pointer;
}
svg {
  flex: none;
}
.sprite {
  display: none;
}
.grow {
  flex: 1;
}

/* browser */
.tabstrip {
  height: 32px;
  display: flex;
  align-items: center;
  padding-left: 7px;
  background: linear-gradient(90deg, #e6cdd0 0, #c98f93 30%, #c99a93 84%, #cf9a9e 88%, #c79b94 91%, #bd8a80 100%);
}
.btab {
  flex: 0 1 214px;
  min-width: 0;
  height: 32px;
  display: flex;
  align-items: center;
  padding: 0 9px 0 11px;
  background: #b4666c;
  border-radius: 8px 8px 0 0;
  color: #fff;
}
.btab.split {
  border-left: 1px solid #dfb9bb;
}
.btab.current {
  background: #a95d63;
}
.fav {
  width: 16px;
  height: 16px;
}
.btab-title {
  flex: 1;
  margin-left: 6px;
  font-family: "Open Sans", sans-serif;
  font-size: 11px;
  white-space: nowrap;
  overflow: hidden;
}
.btab-title.fade {
  -webkit-mask-image: linear-gradient(90deg, #000 85%, transparent);
  mask-image: linear-gradient(90deg, #000 85%, transparent);
}
.btab-x {
  width: 14px;
  height: 16px;
}
.btab-x svg {
  width: 10px;
  height: 10px;
  color: #fff;
}
.round-btn {
  width: 26px;
  height: 26px;
  margin: 0 5px;
  border-radius: 50%;
  background: #b4666c;
}
.round-btn svg {
  width: 12px;
  height: 12px;
}
.win-btns {
  align-self: flex-start;
  display: flex;
  height: 16px;
  margin: 0 4px 0 2px;
  border: 1px solid #6f5450;
  border-top: none;
  border-radius: 0 0 4px 4px;
}
.win-btns button {
  width: 24px;
  border-right: 1px solid #6f5450;
}
.win-btns .win-x {
  width: 38px;
  border: none;
}
.win-btns svg {
  width: 14px;
  height: 12px;
}
.toolbar {
  height: 34px;
  display: flex;
  align-items: center;
  gap: 2px;
  padding: 0 6px;
  background: #a95d63;
}
.nav-btn {
  width: 28px;
  height: 28px;
}
.nav-btn svg {
  width: 16px;
  height: 16px;
}
.nav-btn.big svg {
  width: 20px;
  height: 20px;
}
.omnibox {
  flex: 1;
  height: 26px;
  display: flex;
  align-items: center;
  padding: 0 2px 0 12px;
  margin: 0 5px;
  border-radius: 13px;
  background: #3b3b3b;
}
.lock {
  width: 10px;
  height: 13px;
  margin-right: 10px;
}
.url {
  flex: 1;
  font-family: "Open Sans", sans-serif;
  font-size: 13px;
  color: #a3a3a3;
}
.url b {
  font-weight: normal;
  color: #fff;
}
.omnibox button {
  width: 30px;
  height: 26px;
}
.omnibox button svg {
  width: 15px;
  height: 15px;
}

/* page under the backdrop */
.page {
  flex: 1;
  min-height: 0;
  position: relative;
}
.under {
  padding: 13px 12px;
}
.under-nav {
  height: 43px;
  border-radius: 8px;
  background: #141b40;
}
.under-card {
  height: 72px;
  margin-top: 4px;
  border: 1px solid #3a3b3d;
  border-radius: 8px;
}
.under-list {
  display: flex;
  flex-direction: column;
  gap: 15px;
  padding: 18px 6px;
  line-height: 18px;
  color: #17181a;
}
.modal-wrap {
  position: absolute;
  inset: 0;
  padding: 22px 26px;
}

/* modal */
.modal {
  height: 100%;
  display: flex;
  flex-direction: column;
  background: #fff;
  border-radius: 6px;
  overflow: hidden;
}
.modal-header {
  height: 48px;
  display: flex;
  align-items: center;
  gap: 6px;
  padding: 0 12px;
  border-bottom: 1px solid #dee2e6;
}
.modal-header h1 {
  flex: 1;
  margin: 0;
  font-family: "Open Sans", sans-serif;
  font-size: 15px;
  font-weight: normal;
}
.card-icon {
  width: 17px;
  height: 13px;
}
.modal-x svg {
  width: 13px;
  height: 13px;
}
.modal-main {
  flex: 1;
  min-height: 0;
  display: flex;
}
.modal-body {
  flex: 1;
  min-width: 0;
  overflow: hidden;
  padding: 12px;
}
.scrollbar {
  width: 16px;
  display: flex;
  flex-direction: column;
  background: #f1f1f1;
}
.scrollbar svg {
  width: 16px;
  height: 16px;
}
.track {
  flex: 1;
  padding: 0 2px;
}
.thumb {
  height: 73%;
  background: #c1c1c1;
}
.tabs {
  display: flex;
  border-bottom: 1px solid #dee2e6;
}
.tabs a {
  height: 32px;
  display: flex;
  align-items: center;
  gap: 3px;
  padding: 0 12px;
  margin-bottom: -1px;
  border: 1px solid transparent;
  border-radius: 5px 5px 0 0;
  color: #0d6efd;
  text-decoration: none;
}
.tabs a.active {
  color: #212529;
  background: #fff;
  border-color: #dee2e6 #dee2e6 #fff;
}
.tabs svg,
.pane h2 svg {
  width: 14px;
  height: 12px;
}
.tabs svg.narrow {
  width: 10px;
}
.pane {
  padding: 16px 12px;
}
.pane h2 {
  display: flex;
  align-items: center;
  gap: 3px;
  margin: 0 0 5px;
  font-size: 11px;
  line-height: 21px;
}

/* map */
.map {
  position: relative;
  height: 172px;
  border: 1px solid #dee2e6;
  border-radius: 6px;
  overflow: hidden;
}
.map-canvas {
  display: block;
  width: 100%;
  height: 170px;
}
.map-canvas text {
  font-size: 8px;
  text-anchor: middle;
  fill: #555;
}
.map-canvas .shield text {
  font-size: 7px;
}
.map-canvas .place text {
  font-size: 9px;
  paint-order: stroke;
  stroke: #fff9;
  stroke-width: 2px;
}
.map-canvas .place .sm {
  font-size: 8px;
}
.map-canvas .place .tiny {
  font-size: 7px;
  fill: #7d6a80;
}
.map-canvas .place .peak {
  fill: #9a7a55;
}
.map-canvas .road-name text {
  font-size: 7px;
  text-anchor: start;
  fill: #444;
}
.map-canvas .road-name .border-name {
  fill: #b08fb0;
}
.map-canvas .road-name .water-name {
  fill: #6a9fd0;
}
.map-ctrl {
  position: absolute;
  top: 7px;
  left: 8px;
  display: flex;
  flex-direction: column;
  gap: 9px;
}
.zoom {
  width: 24px;
  border: 1px solid #bbb;
  border-radius: 2px;
  background: #fff;
}
.zoom button {
  width: 22px;
  height: 22px;
  font: bold 16px "Liberation Sans", sans-serif;
  color: #000;
}
.zoom button + button {
  border-top: 1px solid #ccc;
}
.layers {
  width: 34px;
  height: 34px;
  border-radius: 4px;
  background: #fff;
  box-shadow: 0 1px 5px #0004;
}
.layers svg {
  width: 20px;
  height: 20px;
}
.attribution {
  position: absolute;
  right: 0;
  bottom: 0;
  padding: 0 4px;
  font: 9px/13px "Liberation Sans", sans-serif;
  color: #333;
  background: #fffc;
}
.attribution svg {
  width: 9px;
  height: 6px;
  margin-right: 3px;
}
.attribution a {
  color: #0078a8;
  text-decoration: none;
}

/* form */
.row {
  display: grid;
  grid-template-columns: 1fr 1fr;
  gap: 14px 12px;
}
.map + .row {
  margin: 16px 0 12px;
}
.field label {
  display: block;
  margin-bottom: 5px;
  line-height: 18px;
}
.group {
  display: flex;
  height: 29px;
  border: 1px solid #e3e5e8;
  border-radius: 4px;
  overflow: hidden;
}
.group span {
  width: 31px;
  display: flex;
  justify-content: center;
  padding-top: 6px;
  background: #f1f4ff;
  border-right: 1px solid #dee2e6;
}
.group svg {
  width: 13px;
  height: 13px;
}
.group input {
  flex: 1;
  min-width: 0;
  padding: 1px 9px 0;
  border: none;
  outline: none;
  font: inherit;
  color: #212529;
  background: #fff;
}
.btn-outline {
  height: 23px;
  gap: 3px;
  padding: 0 5px;
  border: 1px solid #0d6efd;
  border-radius: 3px;
  font-family: "Open Sans", sans-serif;
  font-size: 10px;
  color: #0d6efd;
}
.btn-outline svg {
  width: 9px;
  height: 9px;
}
hr {
  margin: 6px 0;
  border: none;
  border-top: 1px solid #c8c9ca;
}
.modal-footer {
  height: 55px;
  display: flex;
  align-items: center;
  justify-content: flex-end;
  gap: 6px;
  padding: 0 12px;
  border-top: 1px solid #dee2e6;
}
.btn {
  height: 29px;
  gap: 3px;
  padding: 0 10px;
  border-radius: 5px;
  font-size: 11px;
  color: #fff;
}
.btn svg {
  width: 11px;
  height: 11px;
}
.grey {
  background: #6c757d;
}
.blue {
  background: #0d6efd;
}

/* taskbar */
.taskbar {
  height: 37px;
  display: flex;
  align-items: center;
  gap: 4px;
  border-top: 1px solid #5a5d60;
  background: linear-gradient(90deg, #0c0f12, #142023 15%, #1e1a18 25%, #141416 40%, #191a19 60%, #120d0c 80%, #0b0b0c);
  color: #fff;
}
.start {
  width: 53px;
  height: 36px;
  padding-right: 3px;
}
.start svg {
  width: 36px;
  height: 35px;
}
.app {
  width: 54px;
  height: 36px;
  border: 1px solid transparent;
  border-radius: 2px;
}
.app svg {
  width: 30px;
  height: 30px;
}
.app.open {
  border-color: #85888a;
  background: linear-gradient(160deg, #8a8c8d, #3c3e3f 45%, #242627 60%, #3d3f40);
}
.app.front {
  width: 48px;
  margin-right: 6px;
  border-color: #ccc;
  background: linear-gradient(160deg, #d5d6d6, #8d8f90 50%, #a8a9aa);
  box-shadow: 2px 0 0 #4a4c4d, 3px 0 0 #a5a7a8, 5px 0 0 #3c3e3f, 6px 0 0 #8a8c8d;
}
.app .office {
  font: bold 13px "Open Sans", sans-serif;
  text-anchor: middle;
  fill: #fff;
}
.lang {
  margin-right: 10px;
  font-size: 10px;
}
.tray {
  display: flex;
  gap: 7px;
  padding-right: 2px;
}
.tray svg {
  width: 16px;
  height: 16px;
}
.clock {
  display: flex;
  flex-direction: column;
  align-items: center;
  margin: 0 7px 0 10px;
  font-size: 10px;
  line-height: 16px;
}
.desktop {
  width: 13px;
  height: 36px;
  border: 1px solid #6b6b6b;
  background: linear-gradient(#555, #1a1a1a 50%);
}
```
